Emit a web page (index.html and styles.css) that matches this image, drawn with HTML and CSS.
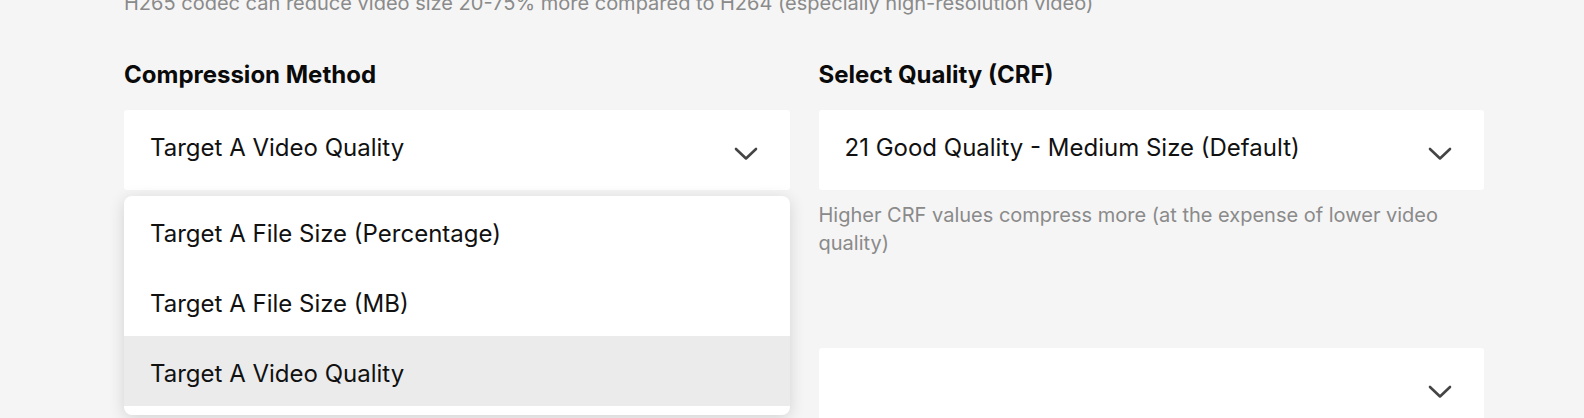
FILE: index.html
```html
<!DOCTYPE html>
<html lang="en">
<head>
  <meta charset="UTF-8" />
  <meta name="viewport" content="width=device-width, initial-scale=1.0"/>
  <title>Video Compressor - Settings</title>
  <link rel="stylesheet" href="styles.css">
</head>
<body>
  <div class="page">
    <p class="intro">H265 codec can reduce video size 20-75% more compared to H264 (especially high-resolution video)</p>

    <div class="settings">
      <div class="field">
        <h3>Compression Method</h3>
        <div class="select-wrap">
          <div class="select">
            <span class="select-text">Target A Video Quality</span>
            <svg class="chevron" width="24" height="14" viewBox="0 0 24 14"><polyline points="2,2 12,11.5 22,2" fill="none" stroke="#444" stroke-width="2.6" stroke-linecap="round" stroke-linejoin="round"/></svg>
          </div>
          <ul class="menu">
            <li>Target A File Size (Percentage)</li>
            <li>Target A File Size (MB)</li>
            <li class="active">Target A Video Quality</li>
          </ul>
        </div>
      </div>

      <div class="field">
        <h3>Select Quality (CRF)</h3>
        <div class="select">
          <span class="select-text">21 Good Quality - Medium Size (Default)</span>
          <svg class="chevron" width="24" height="14" viewBox="0 0 24 14"><polyline points="2,2 12,11.5 22,2" fill="none" stroke="#444" stroke-width="2.6" stroke-linecap="round" stroke-linejoin="round"/></svg>
        </div>
        <p class="hint">Higher CRF values compress more (at the expense of lower video quality)</p>

        <div class="select next">
          <span class="select-text"></span>
          <svg class="chevron" width="24" height="14" viewBox="0 0 24 14"><polyline points="2,2 12,11.5 22,2" fill="none" stroke="#444" stroke-width="2.6" stroke-linecap="round" stroke-linejoin="round"/></svg>
        </div>
      </div>
    </div>
  </div>
</body>
</html>
```

FILE: styles.css
```css
body {
  margin: 0;
  font-family: Inter, "Noto Sans", sans-serif;
  background: #f5f5f5;
  color: #111;
  overflow: hidden;
}

.page {
  width: 1360px;
  padding-left: 124px;
}

.intro {
  margin: -11px 0 0;
  font-size: 20px;
  line-height: 28px;
  color: #8a8a8a;
}

.settings {
  display: grid;
  grid-template-columns: 1fr 1fr;
  column-gap: 29px;
  margin-top: 44px;
}

h3 {
  margin: 0 0 21px;
  font-size: 24px;
  line-height: 28px;
  font-weight: 700;
  color: #0a0a0a;
}

.select-wrap {
  position: relative;
}

.select {
  height: 80px;
  background: white;
  border-radius: 3px;
  display: flex;
  justify-content: space-between;
  align-items: center;
  padding: 0 32px 0 26px;
  box-sizing: border-box;
}

.select-text {
  font-size: 24px;
  line-height: 28px;
  padding-bottom: 4px;
}

.chevron {
  margin-top: 7px;
}

.menu {
  position: absolute;
  top: calc(100% + 6px);
  left: 0;
  right: 0;
  margin: 0;
  padding: 0 0 9px;
  list-style: none;
  background: white;
  border-radius: 8px;
  box-shadow: 0 3px 16px rgba(0, 0, 0, 0.14);
  overflow: hidden;
}

.menu li {
  height: 70px;
  box-sizing: border-box;
  display: flex;
  align-items: center;
  padding: 4px 0 0 26px;
  font-size: 24px;
}

.menu li.active {
  background: #ebebeb;
}

.hint {
  margin: 11px 0 0;
  font-size: 20px;
  line-height: 28px;
  color: #8a8a8a;
}

.select.next {
  margin-top: 91px;
}
```
